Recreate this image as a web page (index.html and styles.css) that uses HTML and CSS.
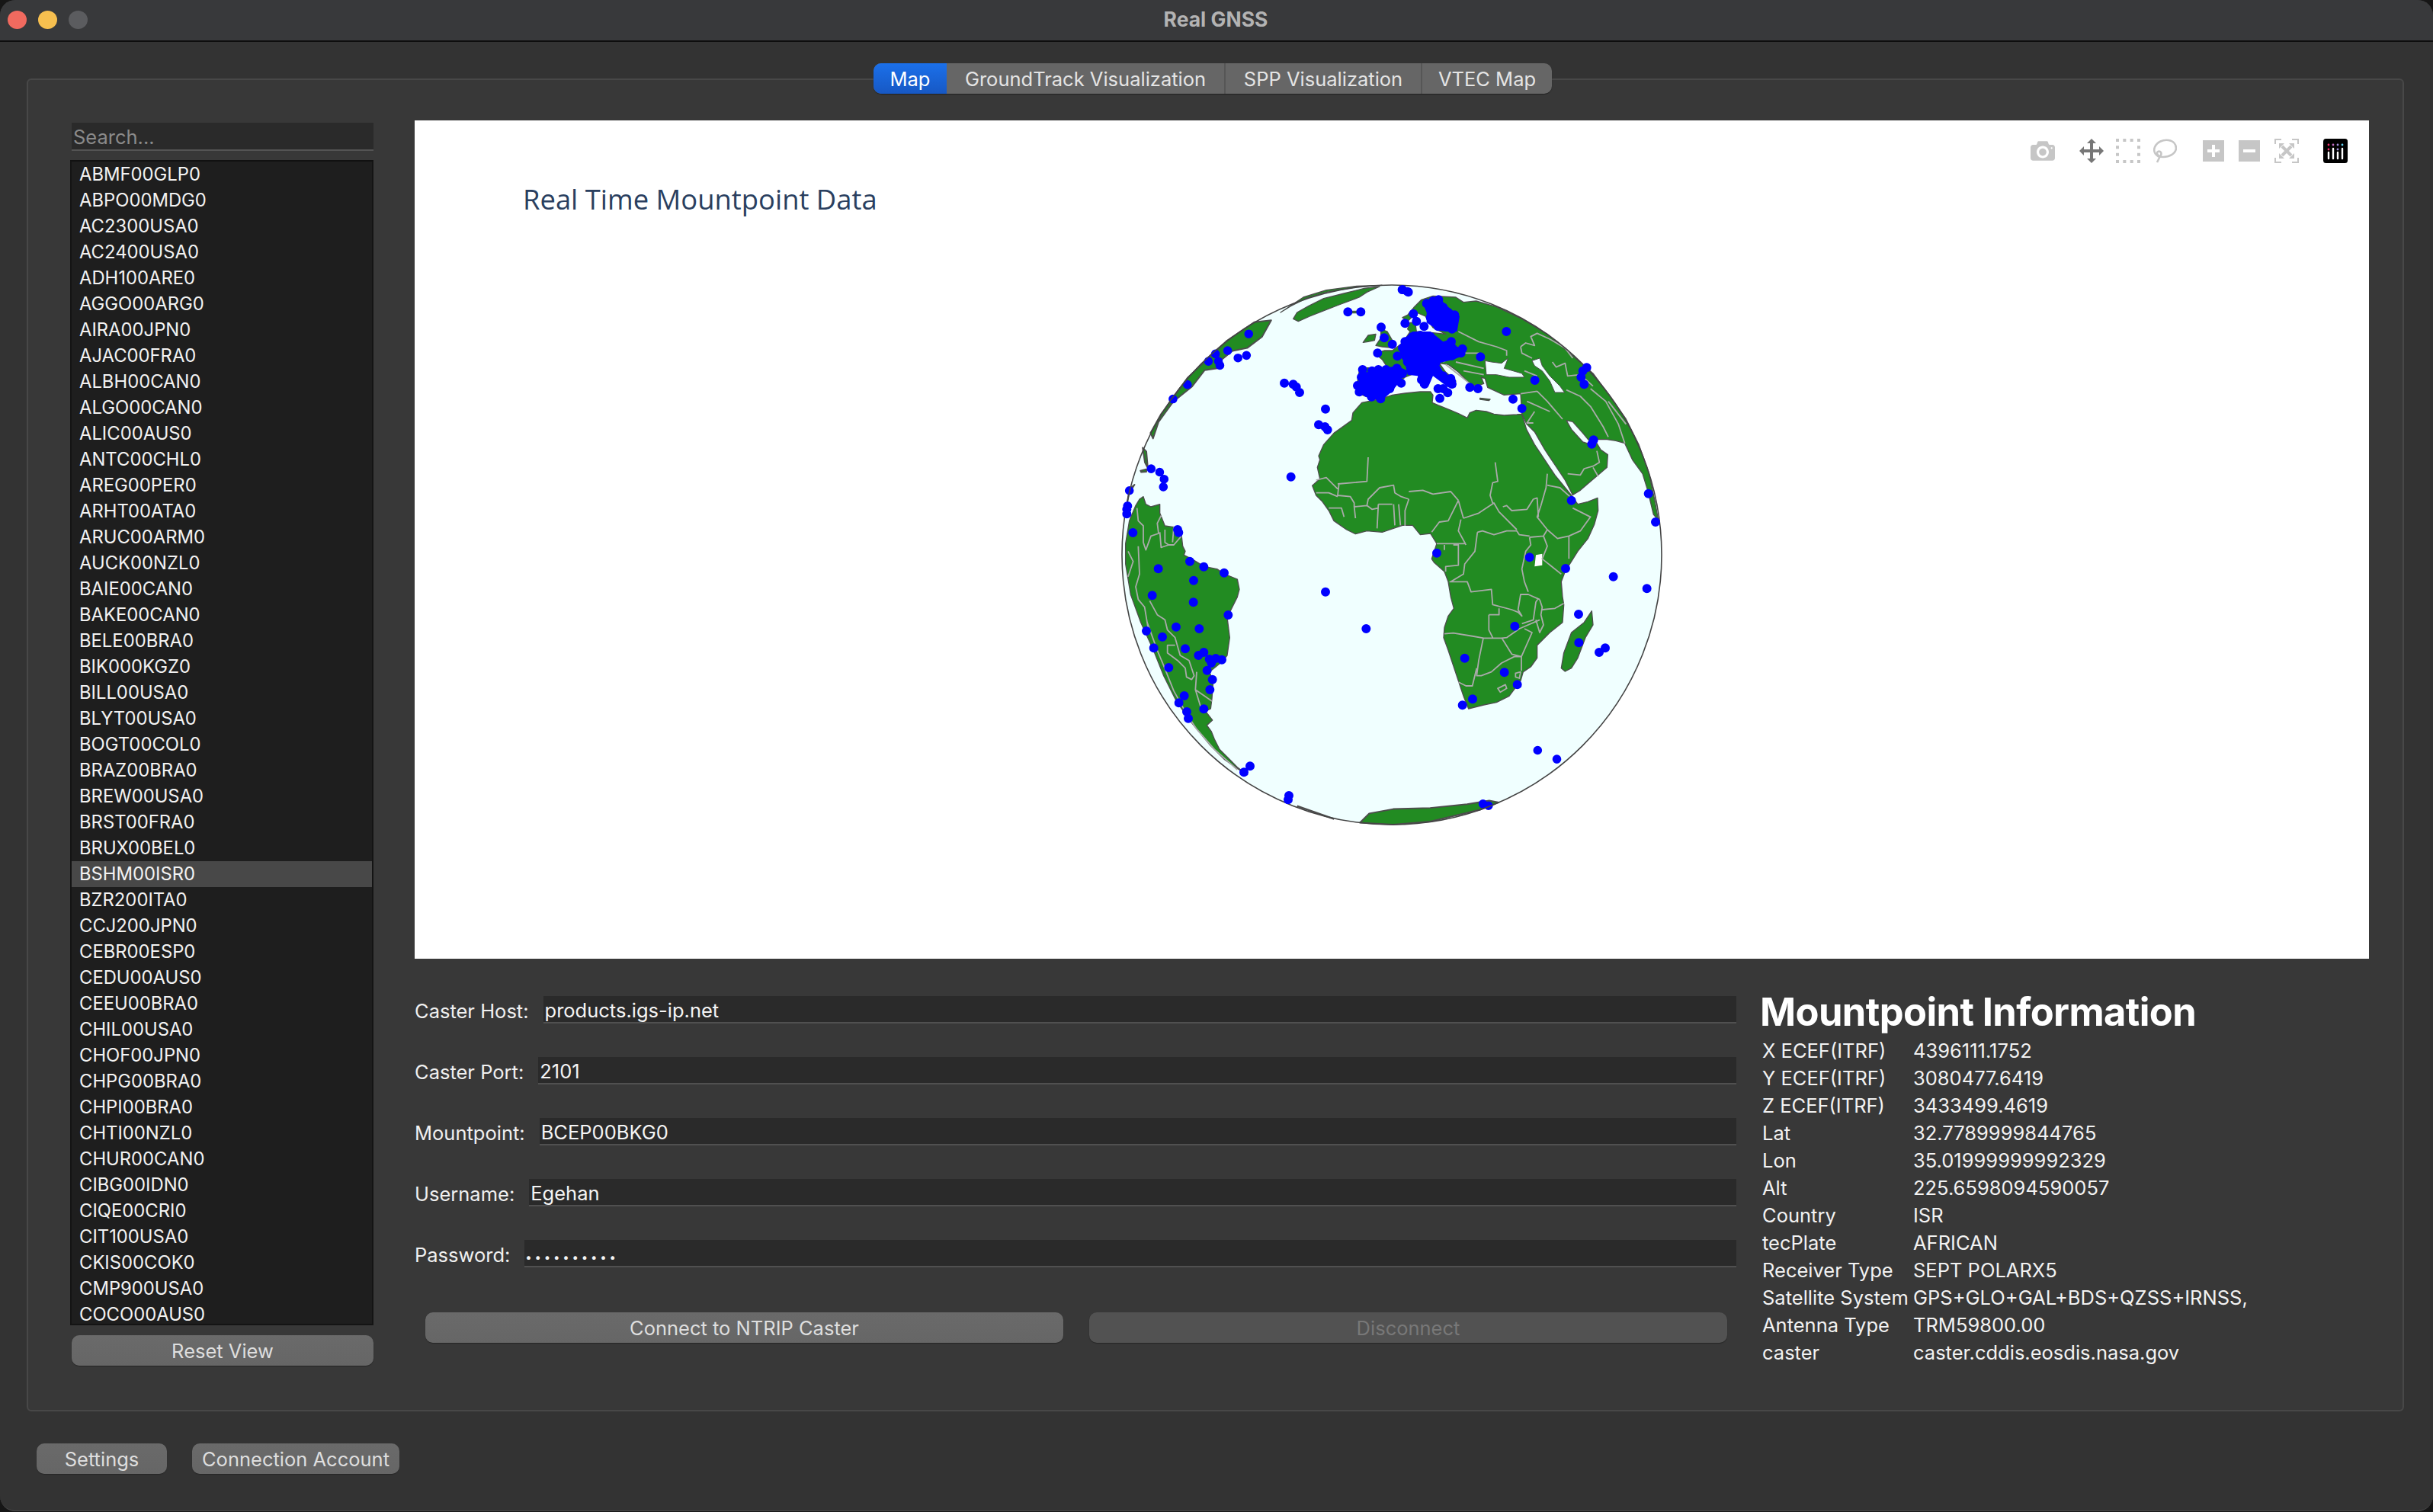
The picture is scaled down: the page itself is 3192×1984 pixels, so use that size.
FILE: index.html
```html
<!DOCTYPE html>
<html lang="en">
<head>
<meta charset="utf-8">
<title>Real GNSS</title>
<link rel="stylesheet" href="styles.css">
</head>
<body>
<div class="window">
  <header class="titlebar">
    <div class="lights"><i class="light red"></i><i class="light yellow"></i><i class="light off"></i></div>
    <div class="app-title">Real GNSS</div>
  </header>

  <main class="frame">
    <nav class="tabs">
      <div class="tab active">Map</div>
      <div class="tab">GroundTrack Visualization</div>
      <div class="tab">SPP Visualization</div>
      <div class="tab">VTEC Map</div>
    </nav>

    <aside class="side">
      <div class="search">Search...</div>
      <div class="list">
        <div class="row">ABMF00GLP0</div><div class="row">ABPO00MDG0</div><div class="row">AC2300USA0</div><div class="row">AC2400USA0</div><div class="row">ADH100ARE0</div><div class="row">AGGO00ARG0</div><div class="row">AIRA00JPN0</div><div class="row">AJAC00FRA0</div><div class="row">ALBH00CAN0</div><div class="row">ALGO00CAN0</div><div class="row">ALIC00AUS0</div><div class="row">ANTC00CHL0</div><div class="row">AREG00PER0</div><div class="row">ARHT00ATA0</div><div class="row">ARUC00ARM0</div><div class="row">AUCK00NZL0</div><div class="row">BAIE00CAN0</div><div class="row">BAKE00CAN0</div><div class="row">BELE00BRA0</div><div class="row">BIK000KGZ0</div><div class="row">BILL00USA0</div><div class="row">BLYT00USA0</div><div class="row">BOGT00COL0</div><div class="row">BRAZ00BRA0</div><div class="row">BREW00USA0</div><div class="row">BRST00FRA0</div><div class="row">BRUX00BEL0</div><div class="row selected">BSHM00ISR0</div><div class="row">BZR200ITA0</div><div class="row">CCJ200JPN0</div><div class="row">CEBR00ESP0</div><div class="row">CEDU00AUS0</div><div class="row">CEEU00BRA0</div><div class="row">CHIL00USA0</div><div class="row">CHOF00JPN0</div><div class="row">CHPG00BRA0</div><div class="row">CHPI00BRA0</div><div class="row">CHTI00NZL0</div><div class="row">CHUR00CAN0</div><div class="row">CIBG00IDN0</div><div class="row">CIQE00CRI0</div><div class="row">CIT100USA0</div><div class="row">CKIS00COK0</div><div class="row">CMP900USA0</div><div class="row">COCO00AUS0</div>
      </div>
      <div class="btn reset">Reset View</div>
    </aside>

    <section class="content">
      <div class="plot">
        <svg class="globe" viewBox="544 158 2564 1100" aria-hidden="true">
          <circle class="ocean" cx="1826" cy="728" r="354"/>
          <!-- Europe, Asia, north Africa: coordinates of a 3x crop at 1680,360 -->
          <g transform="translate(1680 360) scale(.33333)">
            <path class="land" d="M480 170L500 160 525 130 555 100 600 85 690 90 720 110 770 105 850 128 950 175 1050 235 1150 320 1230 390 1300 484 1360 570 1410 670 1450 782 1475 900 1487 968 1468 945 1445 850 1425 785 1385 730 1355 665 1320 655 1285 650 1250 650 1215 655 1190 625 1150 580 1125 575 1145 610 1190 660 1215 668 1245 665 1260 690 1288 710 1285 760 1250 790 1220 815 1180 850 1150 868 1120 810 1080 750 1040 690 1000 620 968 588 950 550 945 470 880 475 815 445 805 410 790 405 800 430 770 440 745 430 725 410 700 385 660 355 625 350 650 385 690 420 680 445 650 430 610 395 590 375 540 385 490 405 460 430 430 465 395 490 360 490 310 470 300 440 310 380 325 368 400 368 420 365 400 335 370 310 410 300 440 300 480 270 510 225 500 215 510 190 530 190 535 225 600 230 650 235 600 210 570 165 535 150 500 185Z"/>
            <path class="land" d="M50 175L65 150 110 125 170 95 250 75 330 55 390 48 340 70 310 90 230 120 165 145 115 165 70 185Z"/>
            <path class="land" d="M0 150L40 125 100 95 180 70 300 50 400 43 300 46 180 62 90 90Z"/>
            <path class="land" d="M325 268L345 240 375 235 370 260 345 265Z"/>
            <path class="land" d="M395 215L420 225 440 260 445 290 400 285 375 280 395 250Z"/>
            <path class="land" d="M270 145H310V152H270Z"/>
            <path class="land" d="M785 487L825 492 820 497 785 492Z"/>
            <path class="sea" d="M805 340L830 345 870 350 895 330 890 345 880 370 950 390 960 405 900 405 850 395 810 395Z"/>
            <path class="sea" d="M990 340L1020 330 1030 360 1060 400 1100 440 1118 465 1080 465 1060 420 1030 380 1000 360Z"/>
            <path class="dark" d="M930 575L968 610"/>
            <path class="border" d="M700 225L780 265 850 285 890 300 890 320M640 345L700 310 780 310M690 345L800 370M720 380L800 395M650 355L720 410 745 430M945 285L965 270 1000 280 985 245 1010 232 1060 255 1120 290 1150 330M945 285L950 310 990 330M1070 345L1085 365 1120 350 1130 400 1180 395 1230 440M960 380L1010 400M945 470L1010 460M1010 460L1050 500 1110 570M970 500L1060 540M1125 455L1180 480 1220 520 1270 600 1290 640M1220 450L1280 500 1330 590 1355 665M1290 500L1360 590M1130 785L1180 790 1195 765 1230 755 1255 740 1245 695M1230 760L1250 795M1000 540L970 585 995 585"/>
            <path class="border" d="M420 535L385 545 355 570 300 590 298 618M150 715H215V680H235L240 640H295V618M298 618L495 750M330 655L345 815 225 825M495 750L525 755 580 715 635 682M565 465L555 510 590 565 597 630 610 665 640 682 680 695 705 680 858 742M820 550L858 742M858 705H1025M690 695L710 735 705 800 680 830 690 860M512 755V800L490 820 430 828 360 860 340 900M845 742L852 815 830 825 828 860 850 900 860 940M1050 790L1045 850 1020 940"/>
          </g>
          <!-- Africa and Madagascar: coordinates of a 3x crop at 1700,600 -->
          <g transform="translate(1700 600) scale(.33333)">
            <path class="land" d="M1188 160L1190 210 1175 265 1150 320 1110 370 1085 410 1060 450 1045 490 1050 550 1055 580 1050 650 1000 690 950 740 950 790 925 825 895 845 885 880 840 940 790 965 740 975 680 990 660 940 640 880 620 820 600 760 582 710 585 670 600 625 622 595 610 550 600 490 585 450 545 415 535 400 555 340 530 300 490 305 460 268 420 268 340 295 280 290 235 302 200 285 150 250 130 210 105 175 80 150 65 112 95 85 85 40 95 10 90 -5 110 -50 150 -95 220 -145 225 -175 260 -215 335 -230 380 -245 430 -252 490 -258 530 -258 540 -245 537 -215 560 -205 610 -185 640 -172 675 -155 685 -175 710 -185 750 -180 780 -170 820 -165 870 -168 890 -170 908 -110 940 -50 980 10 1020 70 1085 150 1110 185 1150 175Z"/>
            <path class="land" d="M1165 605L1170 660 1140 710 1110 790 1085 830 1060 843 1045 830 1055 770 1085 690 1135 650Z"/>
            <path class="lake" d="M945 385L970 380 970 425 940 430Z"/>
            <path class="border" d="M80 90L120 80 150 110 165 125M80 140H130L165 155M165 105L280 95 285 0M170 105L165 150 215 155 230 180 230 195 280 190 300 205 325 200M130 200L150 200 180 200 190 235M230 195L235 240M325 185H380M325 185L320 280M385 185L390 268M405 185L412 268M430 270V210L445 165M445 135L500 130 540 145 610 135 640 170M640 170L600 250 565 255 535 295M280 190L285 165 330 120 385 110 390 140 415 155 445 165M640 170L660 240M650 245L640 290 670 345M660 240L720 220 780 180 800 215 870 285M815 195L830 190 850 210 910 205 935 165 950 160 955 235M775 180L765 150 775 100 795 95 785 20M715 295L735 290 780 305 830 290 870 290 880 305 920 310M715 295L705 370 665 420 660 460 610 490M555 340H670M585 345V365M620 345H640L640 425 590 430 590 450M605 490H675L690 530 770 520 775 580 850 600 875 610 890 625 875 600 885 540H915L960 560M920 315L925 345 905 370 890 440 900 490 915 530M975 310L990 350 970 400 1045 460M920 315L975 310 990 285 1030 320 1075 310V400M1090 200L1160 235 1120 290 1075 310M990 285L950 235 965 190 985 120 990 65M990 110L1040 120 1085 160M585 695L620 692 700 705 740 712H810L830 710 880 675 960 640M760 620L800 620V595M760 620L760 680 775 710M890 655L935 640 945 570 955 555M960 560L970 590 965 620 975 660 960 690 945 640M970 600L1020 595 1055 575M738 712L720 800 712 860 730 860 770 845 810 810 860 785 888 785 930 690 900 675M810 710L850 775 888 785V840M712 830L695 900 670 900 640 885M795 910L825 895 830 910 805 925ZM865 850L885 845 880 870 865 865Z"/>
          </g>
          <!-- South America: coordinates of a 3x crop at 1460,640 -->
          <g transform="translate(1460 640) scale(.33333)">
            <path class="land" d="M105 45L120 35 130 65 150 75 185 65 185 100 205 150 240 155 270 185 275 230 285 250 280 265 310 280 360 310 410 320 440 340 490 360 498 400 490 430 460 490 450 510 460 590 450 660 430 685 380 725 395 760 390 830 385 870 365 880 392 915 370 935 388 960 400 990 420 1030 450 1060 490 1100 530 1130 490 1105 440 1070 380 1010 310 925 250 840 200 740 160 640 110 530 70 420 50 300 50 220 65 130 90 70Z"/>
            <path class="border" d="M95 80L100 130 120 150 120 215 130 245 150 190 180 180 175 140 190 110M185 175L190 235 220 225 240 225 270 190M205 165L205 215 220 225M240 155L235 215M60 250L80 290 60 350M100 230L105 340 90 390 100 440 125 470 140 560M145 445L175 500 205 520 215 560 245 590 265 660 300 680 320 740 310 755 290 745 285 710 255 680 215 650 215 620 245 620M125 470L135 530 175 640 200 700 240 800 290 890 330 950 400 1030 490 1110M325 795L390 840M330 725L325 795 345 860"/>
          </g>
          <!-- North America, Antarctica and outer dots: coordinates of a 2.063x crop at 1440,350 -->
          <g transform="translate(1440 350) scale(.48473)">
            <path class="land" d="M470 145L445 190 405 220 365 228 335 252 325 275 290 280 255 325 205 365 165 420 150 465 143 450 171 400 244 300 350 200 424 150Z"/>
            <path class="land" d="M122 490L132 500 136 545 128 530Z"/>
            <path class="land" d="M116 552L132 548 132 555 118 556Z"/>
            <path class="land" d="M100 590L84 615 80 640 88 600Z"/>
            <path class="land" d="M710 1505L735 1480 800 1468 900 1465 1000 1455 1060 1445 1086 1450 1035 1470 900 1502 800 1510Z"/>
            <path class="dark" d="M540 1460L640 1495"/>
            <path class="dots-small" d="M409 182h0M352 227h0M319 236h0M403 240h0M380 247h0M300 256h0M327 256h0M331 267h0M243 319h0M204 358h0M145 547h0M168 556h0M180 575h0M178 596h0M86 606h0M1043 1454h0M1058 1459h0M1191 1309h0M1243 1333h0M824 62h0M838 67h0"/>
          </g>
          <circle class="limb" cx="1826" cy="728" r="354"/>
          <g transform="translate(1680 360) scale(.33333)">
            <path class="mass" d="M560 115L620 85 650 120 705 165 695 225 650 225 620 220 575 190 575 150ZM470 290L490 250 520 225 590 225 640 265 670 255 695 285 735 290 720 320 680 335 620 350 640 385 690 415 690 445 660 445 600 400 585 435 550 440 540 400 500 395 490 350 470 320ZM345 385L430 365 460 360 500 380 470 420 440 460 400 495 350 490 320 470 305 440 315 385Z"/>
            <path class="dots" d="M575 115h0M600 105h0M622 100h0M590 170h0M610 130h0M640 130h0M660 150h0M685 160h0M680 190h0M675 215h0M620 205h0M640 175h0M600 150h0M630 155h0M650 190h0M565 205h0M535 185h0M523 155h0M490 193h0M396 208h0M408 250h0M440 275h0M382 310h0M490 265h0M520 245h0M550 240h0M590 245h0M480 290h0M510 280h0M540 270h0M570 270h0M600 280h0M630 285h0M660 300h0M500 310h0M530 305h0M560 300h0M590 310h0M620 315h0M650 315h0M675 320h0M672 265h0M716 293h0M710 310h0M520 330h0M550 335h0M580 340h0M610 350h0M500 345h0M460 322h0M787 325h0M520 370h0M560 365h0M590 375h0M620 385h0M640 400h0M670 410h0M675 432h0M560 400h0M555 415h0M567 432h0M475 428h0M458 370h0M480 390h0M323 375h0M318 405h0M303 438h0M310 463h0M360 380h0M385 375h0M415 375h0M345 430h0M370 400h0M400 400h0M430 400h0M350 440h0M380 430h0M410 430h0M430 450h0M340 465h0M358 482h0M394 490h0M405 460h0M375 460h0M620 450h0M640 450h0M658 466h0M627 488h0M745 445h0M777 450h0M915 491h0M950 528h0M1001 417h0M889 225h0M1190 380h0M1205 367h0M1183 405h0M1195 433h0M1232 652h0M1225 668h0M1145 890h0M1448 863h0M1476 975h0M15 428h0M50 433h0M62 443h0M75 465h0M177 530h0M150 592h0M175 600h0M185 612h0M41 797h0M265 148h0M316 148h0M480 60h0M503 70h0"/>
          </g>
          <g transform="translate(1700 600) scale(.33333)">
            <path class="dots" d="M555 377h0M920 394h0M1062 438h0M1250 470h0M1382 517h0M1113 618h0M1114 730h0M1218 751h0M1194 768h0M862 665h0M665 791h0M821 847h0M872 895h0M696 952h0M656 976h0M117 530h0M277 675h0"/>
          </g>
          <g transform="translate(1460 640) scale(.33333)">
            <path class="dots" d="M58 72h0M55 85h0M55 103h0M79 177h0M255 165h0M259 176h0M303 290h0M358 311h0M438 335h0M179 319h0M318 365h0M155 424h0M317 451h0M454 501h0M249 548h0M340 555h0M132 564h0M195 587h0M161 631h0M285 634h0M358 648h0M337 660h0M380 675h0M405 672h0M429 677h0M388 690h0M371 719h0M220 708h0M392 755h0M382 795h0M281 819h0M260 847h0M358 871h0M291 882h0M297 908h0M540 1096h0M516 1120h0M693 1212h0M690 1228h0"/>
          </g>
        </svg>
        <div class="plot-title">Real Time Mountpoint Data</div>
        <div class="modebar">
          <svg class="icon" viewBox="0 0 1000 1000"><path class="ico" transform="matrix(1 0 0 -1 0 850)" d="m500 450c-83 0-150-67-150-150 0-83 67-150 150-150 83 0 150 67 150 150 0 83-67 150-150 150z m400 150h-120c-16 0-34 13-39 29l-31 93c-6 15-23 28-40 28h-340c-16 0-34-13-39-28l-31-94c-6-15-23-28-40-28h-120c-55 0-100-45-100-100v-450c0-55 45-100 100-100h800c55 0 100 45 100 100v450c0 55-45 100-100 100z m-400-550c-138 0-250 112-250 250 0 138 112 250 250 250 138 0 250-112 250-250 0-138-112-250-250-250z m365 380c-19 0-35 16-35 35 0 19 16 35 35 35 19 0 35-16 35-35 0-19-16-35-35-35z"/></svg>
          <div class="mb-group">
            <svg class="icon" viewBox="0 0 1000 1000"><path class="ico-on" transform="matrix(1 0 0 -1 0 850)" d="m1000 350l-187 188 0-125-250 0 0 250 125 0-188 187-187-187 125 0 0-250-250 0 0 125-188-188 186-187 0 125 252 0 0-250-125 0 187-188 188 188-125 0 0 250 250 0 0-126 187 188z"/></svg>
            <svg class="icon" viewBox="0 0 32 32"><rect class="ico-dash" x="2" y="2" width="28" height="28"/></svg>
            <svg class="icon" viewBox="0 0 32 32"><path class="ico-line" d="M9 24C3 21 1 16 3 11 6 4 14 1 21 2 28 3 31 8 31 13 30 20 22 24 14 24 10 24 6 22 6 19 6 17 8 16 10 17 12 18 12 21 10 23L6 31"/></svg>
          </div>
          <div class="mb-group zoomers">
            <svg class="icon-sq" viewBox="0 0 28 28"><path class="ico" d="M0 0H28V28H0ZM12 6V12H6V16H12V22H16V16H22V12H16V6Z" fill-rule="evenodd"/></svg>
            <svg class="icon-sq" viewBox="0 0 28 28"><path class="ico" d="M0 0H28V28H0ZM6 12V16H22V12Z" fill-rule="evenodd"/></svg>
            <svg class="icon" viewBox="0 0 32 32"><path class="ico-bracket" d="M1 7V1H9M23 1H31V7M31 25V31H23M9 31H1V25"/><path class="ico-x" d="M10 10L22 22M22 10L10 22"/><path class="ico" d="M6 6H13L6 13ZM26 6V13L19 6ZM26 26H19L26 19ZM6 26V19L13 26Z"/></svg>
          </div>
          <svg class="logo" viewBox="0 0 32 32"><rect width="32" height="32" rx="3.5"/><circle class="d1" cx="7" cy="8" r="1.4"/><circle class="d2" cx="13" cy="8" r="1.4"/><circle class="d3" cx="19" cy="8" r="1.4"/><circle class="d4" cx="25" cy="8" r="1.4"/><circle class="d1" cx="7" cy="14" r="1.4"/><circle class="d3" cx="19" cy="14" r="1.4"/><path class="bars" d="M7 18V26M13 13V26M19 18V26M25 13V26"/></svg>
        </div>
      </div>

      <div class="lower">
        <form class="form">
          <div class="field"><span class="label">Caster Host:</span><div class="input">products.igs-ip.net</div></div>
          <div class="field"><span class="label">Caster Port:</span><div class="input">2101</div></div>
          <div class="field"><span class="label">Mountpoint:</span><div class="input">BCEP00BKG0</div></div>
          <div class="field"><span class="label">Username:</span><div class="input">Egehan</div></div>
          <div class="field"><span class="label">Password:</span><div class="input"><span class="dotsline">••••••••••</span></div></div>
          <div class="actions">
            <div class="btn">Connect to NTRIP Caster</div>
            <div class="btn disabled">Disconnect</div>
          </div>
        </form>
        <div class="info">
          <h2 class="info-title">Mountpoint Information</h2>
          <dl class="info-grid">
            <dt>X ECEF(ITRF)</dt><dd>4396111.1752</dd>
            <dt>Y ECEF(ITRF)</dt><dd>3080477.6419</dd>
            <dt>Z ECEF(ITRF)</dt><dd>3433499.4619</dd>
            <dt>Lat</dt><dd>32.7789999844765</dd>
            <dt>Lon</dt><dd>35.01999999992329</dd>
            <dt>Alt</dt><dd>225.6598094590057</dd>
            <dt>Country</dt><dd>ISR</dd>
            <dt>tecPlate</dt><dd>AFRICAN</dd>
            <dt>Receiver Type</dt><dd>SEPT POLARX5</dd>
            <dt>Satellite System</dt><dd>GPS+GLO+GAL+BDS+QZSS+IRNSS,</dd>
            <dt>Antenna Type</dt><dd>TRM59800.00</dd>
            <dt>caster</dt><dd>caster.cddis.eosdis.nasa.gov</dd>
          </dl>
        </div>
      </div>
    </section>
  </main>

  <footer class="bottom">
    <div class="btn settings">Settings</div>
    <div class="btn account">Connection Account</div>
  </footer>
</div>
</body>
</html>
```

FILE: styles.css
```css
* { box-sizing: border-box; }
html, body { margin: 0; padding: 0; background: #161616; }
body { width: 3192px; height: 1984px; overflow: hidden; font-family: Inter, "Liberation Sans", sans-serif; font-size: 25.5px; color: #f2f2f2; }

.window { width: 3192px; height: 1983px; background: #333; border-radius: 20px; overflow: hidden; border-bottom: 1px solid #4a4a4a; }

.titlebar { height: 55px; background: #38393b; border-bottom: 2px solid #0e0e0e; display: flex; align-items: center; justify-content: center; position: relative; }
.lights { position: absolute; left: 10px; top: 14px; display: flex; gap: 15px; }
.light { display: block; width: 25px; height: 24px; border-radius: 50%; }
.red { background: #f16a5f; }
.yellow { background: #f6bf4f; }
.off { background: #5b5c5f; }
.app-title { font-weight: 700; font-size: 26.5px; color: #b3b3b3; margin: -3px 0 0 -2px; }

.frame { position: relative; margin: 48px 0 0 35px; width: 3119px; height: 1749px; background: #383838; border: 2px solid #484848; border-radius: 6px; padding: 53px 44px 0 55px; display: flex; gap: 54px; }

.tabs { position: absolute; top: -22px; left: 1109px; height: 40px; display: grid; grid-template-columns: 96px 364px 258px 172px; background: #666; border-radius: 10px; box-shadow: 0 1px 1px #222; overflow: hidden; }
.tab { display: flex; align-items: center; justify-content: center; color: #e4e4e4; font-size: 25.5px; border-left: 2px solid #565656; }
.tab.active { color: #fff; border-left: 0; background: linear-gradient(#1b70ea, #1758c4); }
.tab.active + .tab { border-left: 0; }

.side { width: 398px; flex: none; display: flex; flex-direction: column; }
.search { margin: 3px 0 0 2px; width: 396px; height: 37px; background: #2a2a2a; border-bottom: 2px solid #545454; color: #8a8a8a; line-height: 38px; padding-left: 2px; }
.list { margin-top: 12px; height: 1529px; background: #1e1e1e; border: 2px solid #141414; border-top-color: #111; overflow: hidden; font-size: 23.8px; }
.row { height: 34px; line-height: 34px; padding-left: 10px; white-space: nowrap; }
.row.selected { background: #484848; }
.btn { height: 40px; border-radius: 10px; background: linear-gradient(#6a6a6a, #666); color: #dedede; font-size: 25.5px; display: flex; align-items: center; justify-content: center; box-shadow: 0 1px 1px #262626; }
.reset { margin: 13px 0 0 2px; width: 396px; }

.content { width: 2564px; flex: none; display: flex; flex-direction: column; }
.plot { position: relative; width: 2564px; height: 1100px; background: #fff; flex: none; }
.globe { position: absolute; inset: 0; width: 2564px; height: 1100px; display: block; }
.ocean { fill: #f0ffff; }
.limb { fill: none; stroke: #444; stroke-width: 1.6; }
.land { fill: #228b22; stroke: #4d4d4d; stroke-width: 4; stroke-linejoin: round; }
.sea { fill: #f0ffff; stroke: #4d4d4d; stroke-width: 3; stroke-linejoin: round; }
.lake { fill: #fff; }
.dark { fill: none; stroke: #4d4d4d; stroke-width: 5; }
.border { fill: none; stroke: #aaa; stroke-width: 5.4; stroke-linejoin: round; }
.mass { fill: #0000ff; }
.dots { fill: none; stroke: #0000ff; stroke-width: 36; stroke-linecap: round; }
.dots-small { fill: none; stroke: #0000ff; stroke-width: 24; stroke-linecap: round; }
.plot-title { position: absolute; left: 142px; top: 78px; font-family: "Open Sans", sans-serif; font-size: 36.4px; line-height: 50px; color: #2a3f5f; white-space: nowrap; }

.modebar { position: absolute; top: 24px; right: 28px; display: flex; align-items: flex-start; gap: 32px; }
.mb-group { display: flex; gap: 16px; align-items: flex-start; }
.mb-group.zoomers { gap: 19px; margin-left: 2px; align-items: center; }
.icon { width: 32px; height: 32px; display: block; flex: none; }
.icon-sq { width: 28px; height: 28px; display: block; flex: none; }
.ico { fill: #c6c6c6; }
.ico-on { fill: #777; }
.ico-dash { fill: none; stroke: #c6c6c6; stroke-width: 4; stroke-dasharray: 4 5.33; stroke-dashoffset: 2; }
.ico-line { fill: none; stroke: #c6c6c6; stroke-width: 2.6; }
.ico-bracket { fill: none; stroke: #c6c6c6; stroke-width: 2; }
.ico-x { fill: none; stroke: #c6c6c6; stroke-width: 4; }
.logo { width: 32px; height: 32px; display: block; flex: none; fill: #000; }
.d1 { fill: #ef2f6b; }
.d2 { fill: #c36cc4; }
.d3 { fill: #a291de; }
.d4 { fill: #63d2f2; }
.bars { fill: none; stroke: #fff; stroke-width: 2.4; stroke-linecap: round; }

.lower { display: flex; gap: 34px; }
.form { width: 1734px; flex: none; padding-top: 49px; display: flex; flex-direction: column; gap: 44px; margin: 0; }
.field { display: flex; height: 36px; align-items: center; gap: 19px; }
.label { white-space: nowrap; color: #f0f0f0; flex: none; padding-top: 2px; }
.input { height: 36px; background: #2a2a2a; border-bottom: 2px solid #505050; flex: 1; padding-left: 2px; line-height: 37px; color: #f4f4f4; }
.dotsline { font-size: 15px; letter-spacing: 3.8px; margin-left: -1px; }
.actions { display: flex; gap: 34px; padding: 15px 12px 0 14px; }
.actions .btn { flex: 1; }
.btn.disabled { background: #525252; color: #787878; }

.info { padding-top: 40px; min-width: 0; }
.info-title { margin: 0 0 3px -3px; font-size: 50.6px; line-height: 60px; font-weight: 700; color: #fff; letter-spacing: -.6px; white-space: nowrap; }
.info-grid { margin: 0; display: grid; grid-template-columns: 198px auto; grid-auto-rows: 36px; line-height: 36px; }
.info-grid dt, .info-grid dd { margin: 0; white-space: nowrap; }

.bottom { display: flex; gap: 33px; padding: 42px 0 0 48px; }
.settings { width: 171px; }
.account { width: 272px; }
```
